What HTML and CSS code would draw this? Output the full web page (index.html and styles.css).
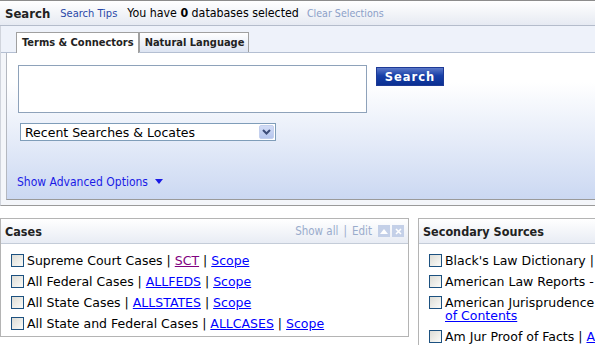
FILE: index.html
```html
<!DOCTYPE html>
<html lang="en">

<head>
    <meta charset="UTF-8">
    <title>Search</title>
    <link rel="stylesheet" href="styles.css">
</head>

<body>
    <div class="topbar">
        <span class="topbar-title">Search</span>
        <a class="tips" href="#">Search Tips</a>
        <span class="count">You have <b>0</b> databases selected</span>
        <a class="clear" href="#">Clear Selections</a>
    </div>

    <div class="search-area">
        <!-- Tabs -->
        <div class="tab-strip">
            <span class="tab active">Terms &amp; Connectors</span>
            <span class="tab">Natural Language</span>
        </div>

        <div class="search-panel">
            <div class="query-row">
                <textarea class="query"></textarea>
                <button class="search-btn">Search</button>
            </div>
            <div class="recent">
                <span>Recent Searches &amp; Locates</span>
                <span class="recent-arrow">
                    <svg width="9" height="6" viewBox="0 0 9 6"><path d="M1 1l3.5 3.5L8 1" fill="none" stroke="#3c4c78" stroke-width="2"/></svg>
                </span>
            </div>
            <a class="advanced" href="#">Show Advanced Options <span class="caret"></span></a>
        </div>
    </div>

    <div class="boxes">
        <!-- Cases -->
        <div class="box cases">
            <div class="box-head">
                <span class="box-title">Cases</span>
                <span class="box-tools">
                    Show all <span class="sep">|</span> Edit
                    <span class="tool-btn first">
                        <svg width="8" height="5" viewBox="0 0 8 5"><path d="M0 5L4 0l4 5z" fill="#fff"/></svg>
                    </span>
                    <span class="tool-btn">
                        <svg width="7" height="7" viewBox="0 0 7 7"><path d="M1 1l5 5M6 1L1 6" stroke="#fff" stroke-width="1.6"/></svg>
                    </span>
                </span>
            </div>
            <ul class="db-list">
                <li><span class="cb"></span><span>Supreme Court Cases | <a class="visited" href="#">SCT</a> | <a href="#">Scope</a></span></li>
                <li><span class="cb"></span><span>All Federal Cases | <a href="#">ALLFEDS</a> | <a href="#">Scope</a></span></li>
                <li><span class="cb"></span><span>All State Cases | <a href="#">ALLSTATES</a> | <a href="#">Scope</a></span></li>
                <li><span class="cb"></span><span>All State and Federal Cases | <a href="#">ALLCASES</a> | <a href="#">Scope</a></span></li>
            </ul>
        </div>

        <!-- Secondary Sources -->
        <div class="box">
            <div class="box-head">
                <span class="box-title">Secondary Sources</span>
            </div>
            <ul class="db-list">
                <li><span class="cb"></span><span>Black's Law Dictionary | <a href="#">DI</a> | <a href="#">Scope</a></span></li>
                <li><span class="cb"></span><span>American Law Reports - <a href="#">ALR</a> | <a href="#">Scope</a></span></li>
                <li><span class="cb"></span><span>American Jurisprudence 2d | <a href="#">Table</a><br><a href="#">of Contents</a></span></li>
                <li><span class="cb"></span><span>Am Jur Proof of Facts | <a href="#">AMJUR-POF</a> | <a href="#">Scope</a></span></li>
            </ul>
        </div>
    </div>
</body>

</html>
```

FILE: styles.css
```css
body {
    margin: 0;
    font-family: "DejaVu Sans", Verdana, sans-serif;
    background: #fff;
    overflow: hidden;
}

a {
    color: #0000ff;
}

a.visited {
    color: #800080;
}

/* Top bar */
.topbar {
    height: 24px;
    display: flex;
    align-items: center;
    border-top: 1px solid #8c8c8c;
    border-bottom: 1px solid #b4bccb;
    background: linear-gradient(#ffffff, #e6eaf2);
    font-family: "DejaVu Sans Condensed", sans-serif;
    font-size: 11px;
    padding-left: 5px;
}

.topbar-title {
    font-size: 13px;
    font-weight: bold;
    color: #222;
    margin-right: 10px;
}

.topbar a {
    text-decoration: none;
}

.tips {
    color: #2a48a8 !important;
    margin-right: 10px;
}

.count {
    color: #000;
    font-size: 12.3px;
    margin-right: 8px;
}

.clear {
    color: #8ca0c8 !important;
    font-size: 10.6px;
}

/* Search area */
.search-area {
    border-left: 1px solid #d0d4dc;
    border-bottom: 1px solid #9a9a9a;
    background: #f4f6fa;
    padding-bottom: 5px;
}

.tab-strip {
    height: 26px;
    background: #eef2fa;
    border-bottom: 1px solid #b4bfd2;
    display: flex;
    align-items: flex-end;
    padding-left: 15px;
    font-family: "DejaVu Sans Condensed", sans-serif;
    font-size: 11px;
    font-weight: bold;
}

.tab {
    height: 19px;
    line-height: 19px;
    padding: 0 4px 0 5px;
    border: 1px solid #a0a0a0;
    border-bottom: none;
    background: linear-gradient(#ffffff, #dde4f2);
    color: #222;
}

.tab.active {
    background: #fff;
    height: 20px;
    margin-bottom: -1px;
    padding: 0 4px 0 5px;
    position: relative;
}

.search-panel {
    margin-left: 5px;
    border-left: 1px solid #b4b8c0;
    border-bottom: 1px solid #9a9a9a;
    background: linear-gradient(#ffffff 20%, #cbd8f2);
    padding: 12px 0 9px 11px;
}

.query-row {
    display: flex;
    align-items: flex-start;
}

.query {
    width: 347px;
    height: 46px;
    margin: 0;
    border: 1px solid #8ea2ba;
    resize: none;
    padding: 0;
}

.search-btn {
    margin: 2px 0 0 9px;
    width: 68px;
    height: 19px;
    border: 1px solid #1e3a96;
    background: linear-gradient(#5b78c8, #1840a8 45%, #0a2f92);
    color: #fff;
    font-family: "DejaVu Sans", sans-serif;
    font-size: 11.5px;
    font-weight: bold;
    letter-spacing: 1px;
    padding: 0;
}

.recent {
    margin: 10px 0 0 2px;
    width: 250px;
    height: 16px;
    border: 1px solid #7f9db9;
    background: #fff;
    display: flex;
    align-items: center;
    justify-content: space-between;
    font-size: 12.5px;
    padding-left: 4px;
}

.recent-arrow {
    width: 15px;
    height: 14px;
    margin-right: 1px;
    background: linear-gradient(#d2dcf6, #b6c6ee);
    border: 1px solid #c4d0ee;
    border-radius: 2px;
    display: flex;
    align-items: center;
    justify-content: center;
    box-sizing: border-box;
}

.advanced {
    display: inline-block;
    margin-top: 34px;
    font-family: "DejaVu Sans Condensed", sans-serif;
    font-size: 12px;
    color: #1a1ae6;
    text-decoration: none;
    margin-left: -1px;
}

.caret {
    display: inline-block;
    margin-left: 4px;
    border-left: 4px solid transparent;
    border-right: 4px solid transparent;
    border-top: 5px solid #1a1ae6;
    vertical-align: 2px;
}

/* Boxes */
.boxes {
    display: grid;
    grid-template-columns: 409px 400px;
    align-items: start;
    gap: 9px;
    margin-top: 12px;
}

.box {
    border: 1px solid #b4b4b4;
    height: 150px;
}

.box.cases {
    height: 117px;
}

.box-head {
    height: 24px;
    display: flex;
    align-items: center;
    justify-content: space-between;
    border-bottom: 1px solid #c4ccd8;
    background: linear-gradient(#ffffff, #e8ecf4);
    padding: 0 4px;
}

.box-title {
    font-family: "DejaVu Sans Condensed", sans-serif;
    font-weight: bold;
    font-size: 12.5px;
    color: #222;
}

.box-tools {
    display: flex;
    align-items: center;
    font-family: "DejaVu Sans Condensed", sans-serif;
    font-size: 11.5px;
    color: #9aaccc;
}

.sep {
    margin: 0 5px;
}

.tool-btn {
    width: 12px;
    height: 12px;
    background: #c4d0e8;
    display: flex;
    align-items: center;
    justify-content: center;
    margin-left: 2px;
}

.tool-btn.first {
    margin-left: 6px;
}

.db-list {
    list-style: none;
    margin: 0;
    padding: 10px 0 0 10px;
    font-size: 12.5px;
    line-height: 13px;
}

.db-list li {
    display: flex;
    align-items: flex-start;
    margin-bottom: 8px;
    white-space: nowrap;
}

.cb {
    flex: none;
    width: 11px;
    height: 11px;
    border: 1px solid #1c5180;
    background: linear-gradient(135deg, #dcdcd6, #fbfbf8);
    margin-right: 3px;
}
```
